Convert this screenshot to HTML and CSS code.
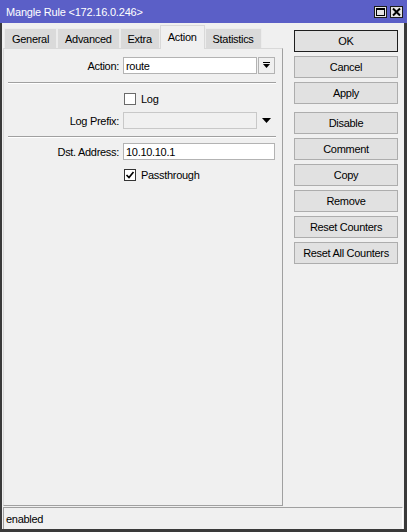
FILE: index.html
```html
<!DOCTYPE html>
<html>
<head>
<meta charset="utf-8">
<title>Mangle Rule</title>
<link rel="stylesheet" href="styles.css">
</head>
<body>
<div class="window">
  <div class="titlebar">
    <span class="title">Mangle Rule &lt;172.16.0.246&gt;</span>
    <div class="caption-btns">
      <span class="cap-btn">
        <svg width="11" height="10" viewBox="0 0 11 10"><rect x="1.5" y="1.5" width="8" height="7" fill="none" stroke="#000" stroke-width="1"/><rect x="1" y="1" width="9" height="2" fill="#000"/></svg>
      </span>
      <span class="cap-btn">
        <svg width="11" height="10" viewBox="0 0 11 10"><path d="M2 1.5 L9 8.5 M9 1.5 L2 8.5" stroke="#000" stroke-width="2"/></svg>
      </span>
    </div>
  </div>
  <div class="frame">
    <div class="main">
      <div class="tabarea">
        <div class="tabs">
          <span class="tab">General</span>
          <span class="tab">Advanced</span>
          <span class="tab">Extra</span>
          <span class="tab active">Action</span>
          <span class="tab">Statistics</span>
        </div>
        <div class="page">
          <div class="row">
            <span class="lbl">Action:</span>
            <span class="input">route</span>
            <span class="dd-btn">
              <svg width="7" height="7" viewBox="0 0 7 7"><rect x="0" y="0" width="7" height="1" fill="#000"/><polygon points="0,2 7,2 3.5,6" fill="#000"/></svg>
            </span>
          </div>
          <div class="sep"></div>
          <div class="row row-check first-check">
            <span class="lbl"></span>
            <span class="check"><span class="box"></span>Log</span>
          </div>
          <div class="row row-prefix">
            <span class="lbl">Log Prefix:</span>
            <span class="input disabled"></span>
            <span class="dd-arrow">
              <svg width="9" height="5" viewBox="0 0 9 5"><polygon points="0,0 9,0 4.5,5" fill="#000"/></svg>
            </span>
          </div>
          <div class="sep sep-2"></div>
          <div class="row row-dst">
            <span class="lbl">Dst. Address:</span>
            <span class="input wide">10.10.10.1</span>
          </div>
          <div class="row row-check last-check">
            <span class="lbl"></span>
            <span class="check"><span class="box checked"><svg width="10" height="10" viewBox="0 0 10 10"><path d="M1.5 5 L4 7.5 L8.5 2" fill="none" stroke="#000" stroke-width="1.7"/></svg></span>Passthrough</span>
          </div>
        </div>
      </div>
      <div class="buttons">
        <div class="btn-group">
          <span class="btn default">OK</span>
          <span class="btn">Cancel</span>
          <span class="btn">Apply</span>
        </div>
        <div class="btn-group">
          <span class="btn">Disable</span>
          <span class="btn">Comment</span>
          <span class="btn">Copy</span>
          <span class="btn">Remove</span>
          <span class="btn">Reset Counters</span>
          <span class="btn">Reset All Counters</span>
        </div>
      </div>
    </div>
    <div class="status"><span>enabled</span></div>
  </div>
</div>
</body>
</html>
```

FILE: styles.css
```css
* {
  box-sizing: border-box;
}

html,
body {
  margin: 0;
  padding: 0;
}

body {
  width: 407px;
  height: 532px;
  background: #f0f0f0;
  font-family: "Liberation Sans", Arial, sans-serif;
  font-size: 11px;
  letter-spacing: -0.3px;
  color: #000;
}

.window {
  width: 407px;
  height: 532px;
  display: flex;
  flex-direction: column;
}

/* caption */
.titlebar {
  height: 23px;
  background: #5b5fc7;
  display: flex;
  align-items: center;
  justify-content: space-between;
  padding: 0 4px 0 6px;
}

.title {
  color: #fff;
  letter-spacing: -0.2px;
}

.caption-btns {
  display: flex;
  gap: 3px;
}

.cap-btn {
  width: 13px;
  height: 12px;
  background: #e4e4e4;
  border: 1px solid #1c1c1c;
  display: flex;
  align-items: center;
  justify-content: center;
}

/* window body below the caption */
.frame {
  flex: 1;
  display: flex;
  flex-direction: column;
  border-left: 2px solid #3a3a3a;
  border-right: 3px solid #3a3a3a;
  border-bottom: 3px solid #3a3a3a;
  background: #f0f0f0;
}

.main {
  flex: 1;
  display: flex;
}

.tabarea {
  width: 280px;
  margin-left: 1px;
  display: flex;
  flex-direction: column;
}

.tabs {
  height: 25px;
  display: flex;
  align-items: flex-end;
  padding-left: 1px;
  position: relative;
  z-index: 1;
}

.tab {
  height: 20px;
  padding: 0 7px;
  display: flex;
  align-items: center;
  background: #dadada;
  border: 1px solid #ececec;
  border-bottom: none;
}

.tab.active {
  height: 24px;
  margin-bottom: -1px;
  padding-bottom: 2px;
  background: #f0f0f0;
  border: 1px solid #d9d9d9;
  border-bottom: none;
}

.page {
  height: 458px;
  border: 1px solid #d9d9d9;
  border-right-color: #a0a0a0;
  border-bottom-color: #a0a0a0;
  padding-top: 8px;
  display: flex;
  flex-direction: column;
}

/* label | field | drop-down button */
.row {
  display: grid;
  grid-template-columns: 118px 134px 17px;
  column-gap: 1px;
  height: 17px;
  align-items: center;
}

.lbl {
  text-align: right;
  padding-right: 3px;
}

.input {
  height: 17px;
  background: #fff;
  border: 1px solid #b3b3b3;
  padding: 0 2px;
  display: flex;
  align-items: center;
}

.input.disabled {
  background: #f0f0f0;
  border-color: #c8c8c8;
}

.input.wide {
  grid-column: 2 / 4;
}

.dd-btn {
  height: 17px;
  border: 1px solid #b3b3b3;
  background: #f0f0f0;
  display: flex;
  align-items: center;
  justify-content: center;
}

.dd-arrow {
  display: flex;
  align-items: center;
  justify-content: center;
}

svg {
  display: block;
}

.sep {
  margin: 8px 0 0 4px;
  width: 268px;
  border-top: 1px solid #a0a0a0;
  border-bottom: 1px solid #fff;
}

.sep-2 {
  margin-top: 7px;
}

.first-check {
  margin-top: 6px;
}

.row-prefix {
  margin-top: 5px;
}

.row-dst {
  margin-top: 5px;
}

.last-check {
  margin-top: 6px;
}

.check {
  grid-column: 2 / 4;
  display: flex;
  align-items: center;
  gap: 5px;
  padding-left: 1px;
}

.box {
  width: 12px;
  height: 12px;
  background: #fff;
  border: 1px solid #6a6a6a;
  display: flex;
  align-items: center;
  justify-content: center;
}

.box.checked {
  border-color: #333;
}

/* command buttons */
.buttons {
  padding: 7px 0 0 11px;
  display: flex;
  flex-direction: column;
  gap: 8px;
}

.btn-group {
  display: flex;
  flex-direction: column;
  gap: 4px;
}

.btn {
  width: 104px;
  height: 22px;
  background: #e1e1e1;
  border: 1px solid #adadad;
  display: flex;
  align-items: center;
  justify-content: center;
}

.btn.default {
  border-color: #1e1e1e;
}

/* status bar */
.status {
  height: 22px;
  margin: 0 1px;
  border-top: 1px solid #a0a0a0;
  border-left: 1px solid #a0a0a0;
  border-right: 1px solid #fff;
  padding-left: 2px;
  display: flex;
  align-items: center;
}
```
